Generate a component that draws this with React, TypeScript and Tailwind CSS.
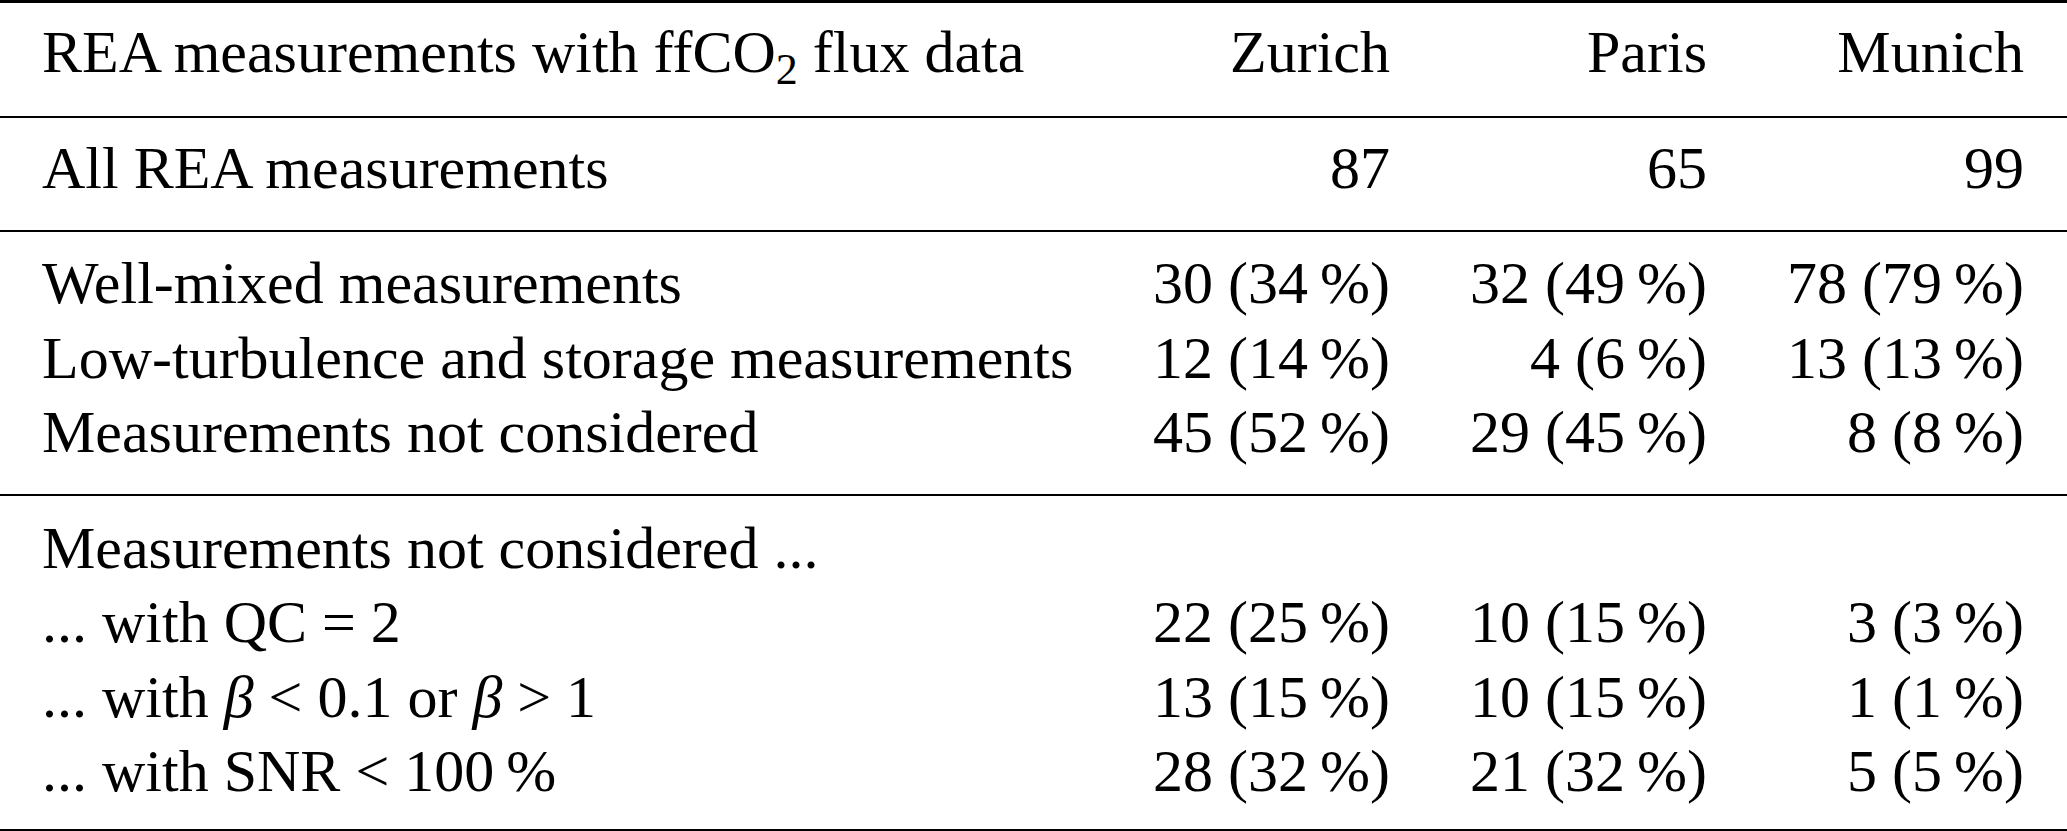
const cities = ["Zurich", "Paris", "Munich"];

type Row = { label: React.ReactNode; values: string[] };

const pct = (n: number, p: number) => `${n} (${p}\u2009%)`;

const classes: Row[] = [
  { label: "Well-mixed measurements", values: [pct(30, 34), pct(32, 49), pct(78, 79)] },
  { label: "Low-turbulence and storage measurements", values: [pct(12, 14), pct(4, 6), pct(13, 13)] },
  { label: "Measurements not considered", values: [pct(45, 52), pct(29, 45), pct(8, 8)] },
];

const reasons: Row[] = [
  { label: "Measurements not considered ...", values: ["", "", ""] },
  { label: "... with QC = 2", values: [pct(22, 25), pct(10, 15), pct(3, 3)] },
  {
    label: (
      <>
        ... with <i>β</i> &lt; 0.1 or <i>β</i> &gt; 1
      </>
    ),
    values: [pct(13, 15), pct(10, 15), pct(1, 1)],
  },
  { label: "... with SNR < 100\u2009%", values: [pct(28, 32), pct(21, 32), pct(5, 5)] },
];

const Rule = ({ thick }: { thick?: boolean }) => (
  <div className={thick ? "h-[3px] bg-black" : "h-[2px] bg-black"} />
);

const Rows = ({ rows }: { rows: Row[] }) => (
  <>
    {rows.map((r, i) => (
      <div key={i} className="grid grid-cols-[minmax(0,1fr)_317px_317px_317px] pl-[42px] pr-[43px]">
        <div className="whitespace-nowrap">{r.label}</div>
        {r.values.map((v, j) => (
          <div key={j} className="text-right whitespace-nowrap">
            {v}
          </div>
        ))}
      </div>
    ))}
  </>
);

export default function App() {
  return (
    <div
      className="w-[2067px] h-[831px] bg-white text-black text-[60px] leading-[74.5px] overflow-hidden"
      style={{ fontFamily: '"Liberation Serif", "Times New Roman", serif' }}
    >
      <Rule thick />
      <div className="pt-[12px] pb-[26px]">
        <div className="grid grid-cols-[minmax(0,1fr)_317px_317px_317px] pl-[42px] pr-[43px]">
          <div className="whitespace-nowrap">
            REA measurements with ffCO<span className="text-[44px] leading-none relative top-[12px]">2</span> flux data
          </div>
          {cities.map((c) => (
            <div key={c} className="text-right">
              {c}
            </div>
          ))}
        </div>
      </div>
      <Rule />
      <div className="pt-[13px] pb-[25px]">
        <Rows rows={[{ label: "All REA measurements", values: ["87", "65", "99"] }]} />
      </div>
      <Rule />
      <div className="pt-[14px] pb-[24px]">
        <Rows rows={classes} />
      </div>
      <Rule />
      <div className="pt-[15px] pb-[20px]">
        <Rows rows={reasons} />
      </div>
      <Rule thick />
    </div>
  );
}
